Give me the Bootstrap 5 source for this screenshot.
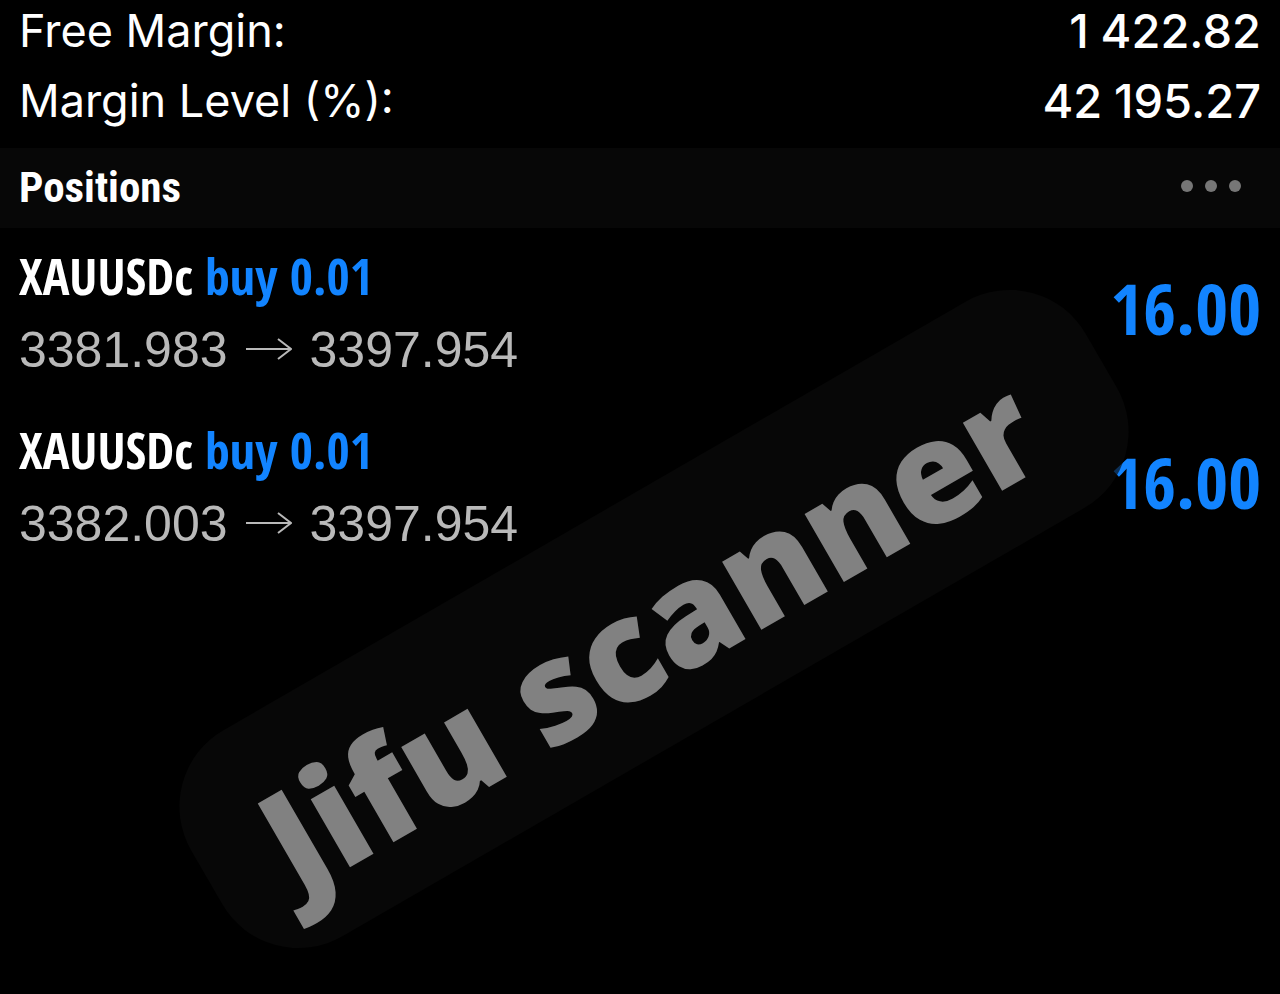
<!DOCTYPE html>
<html lang="en" data-bs-theme="dark">
<head>
<meta charset="utf-8">
<meta name="viewport" content="width=device-width, initial-scale=1">
<title>Positions</title>
<link href="https://cdn.jsdelivr.net/npm/bootstrap@5.3.0/dist/css/bootstrap.min.css" rel="stylesheet">
<style>
  body { background: #000; color: #fff; font-family: Inter, "Liberation Sans", sans-serif; }
  .screen { min-height: 100vh; }
  .gutter { padding-left: 19px; padding-right: 19px; }
  .summary { line-height: 62px; padding-bottom: 16px; }
  .summary dt { font-weight: 400; font-size: 45px; }
  .summary dd { font-weight: 500; font-size: 47px; }
  .section-bar { background: #070707; height: 80px; }
  .section-title { font: 700 43px/78px "Roboto Condensed", "Liberation Sans", sans-serif; }
  .more-btn { color: #767676; width: 100px; height: 44px; }
  .positions { padding-top: 16px; }
  .position-item { height: 174px; }
  .symbol-line { font: 700 50px/64px "Open Sans Condensed", "Liberation Sans", sans-serif; }
  .price-line { font: 400 50px/84px "Liberation Sans", Arial, sans-serif; color: #b9b9b9; }
  .price-arrow { width: 46px; height: 24px; margin: 0 18px; }
  .side, .profit { color: #1284ff; }
  .profit { font: 700 71px/128px "Open Sans Condensed", "Liberation Sans", sans-serif; }
  /* Stamp laid over the whole screen */
  .stamp { top: 50%; left: 50%; width: 1033px; height: 238px; margin: 122px 0 0 14px;
    padding: 16px 24px 0 0;
    transform: translate(-50%, -50%) rotate(-30deg); border-radius: 88px;
    background: rgba(10, 10, 10, .68); color: #818181; pointer-events: none;
    font: 900 142px/222px "Noto Sans", "Open Sans", sans-serif; white-space: nowrap; }
</style>
</head>
<body>
<main class="screen position-relative overflow-hidden">
  <dl class="summary gutter d-flex flex-column gap-2 mb-0">
    <div class="d-flex justify-content-between"><dt>Free Margin:</dt><dd class="mb-0">1&#8197;422.82</dd></div>
    <div class="d-flex justify-content-between"><dt>Margin Level (%):</dt><dd class="mb-0">42&#8197;195.27</dd></div>
  </dl>
  <header class="section-bar gutter d-flex align-items-start justify-content-between">
    <h1 class="section-title mb-0">Positions</h1>
    <button type="button" class="more-btn btn border-0 p-0 mt-3 d-flex justify-content-center align-items-center" aria-label="More">
      <svg width="60" height="12" viewBox="0 0 60 12" fill="currentColor" aria-hidden="true"><circle cx="6" cy="6" r="6"/><circle cx="30" cy="6" r="6"/><circle cx="54" cy="6" r="6"/></svg>
    </button>
  </header>
  <ul class="positions list-unstyled mb-0">
    <li class="position-item gutter d-flex justify-content-between align-items-start">
      <div>
        <div class="symbol-line">XAUUSDc <span class="side">buy 0.01</span></div>
        <div class="price-line d-flex align-items-center"><span>3381.983</span>
          <svg class="price-arrow" viewBox="0 0 46 24" fill="none" stroke="currentColor" stroke-width="2" role="img" aria-label="to"><path d="M0 11H45M32 1L45 11L32 21"/></svg>
          <span>3397.954</span></div>
      </div>
      <div class="profit">16.00</div>
    </li>
    <li class="position-item gutter d-flex justify-content-between align-items-start">
      <div>
        <div class="symbol-line">XAUUSDc <span class="side">buy 0.01</span></div>
        <div class="price-line d-flex align-items-center"><span>3382.003</span>
          <svg class="price-arrow" viewBox="0 0 46 24" fill="none" stroke="currentColor" stroke-width="2" role="img" aria-label="to"><path d="M0 11H45M32 1L45 11L32 21"/></svg>
          <span>3397.954</span></div>
      </div>
      <div class="profit">16.00</div>
    </li>
  </ul>
  <div class="stamp position-absolute text-center">Jifu scanner</div>
</main>
<script src="https://cdn.jsdelivr.net/npm/bootstrap@5.3.0/dist/js/bootstrap.bundle.min.js"></script>
</body>
</html>
